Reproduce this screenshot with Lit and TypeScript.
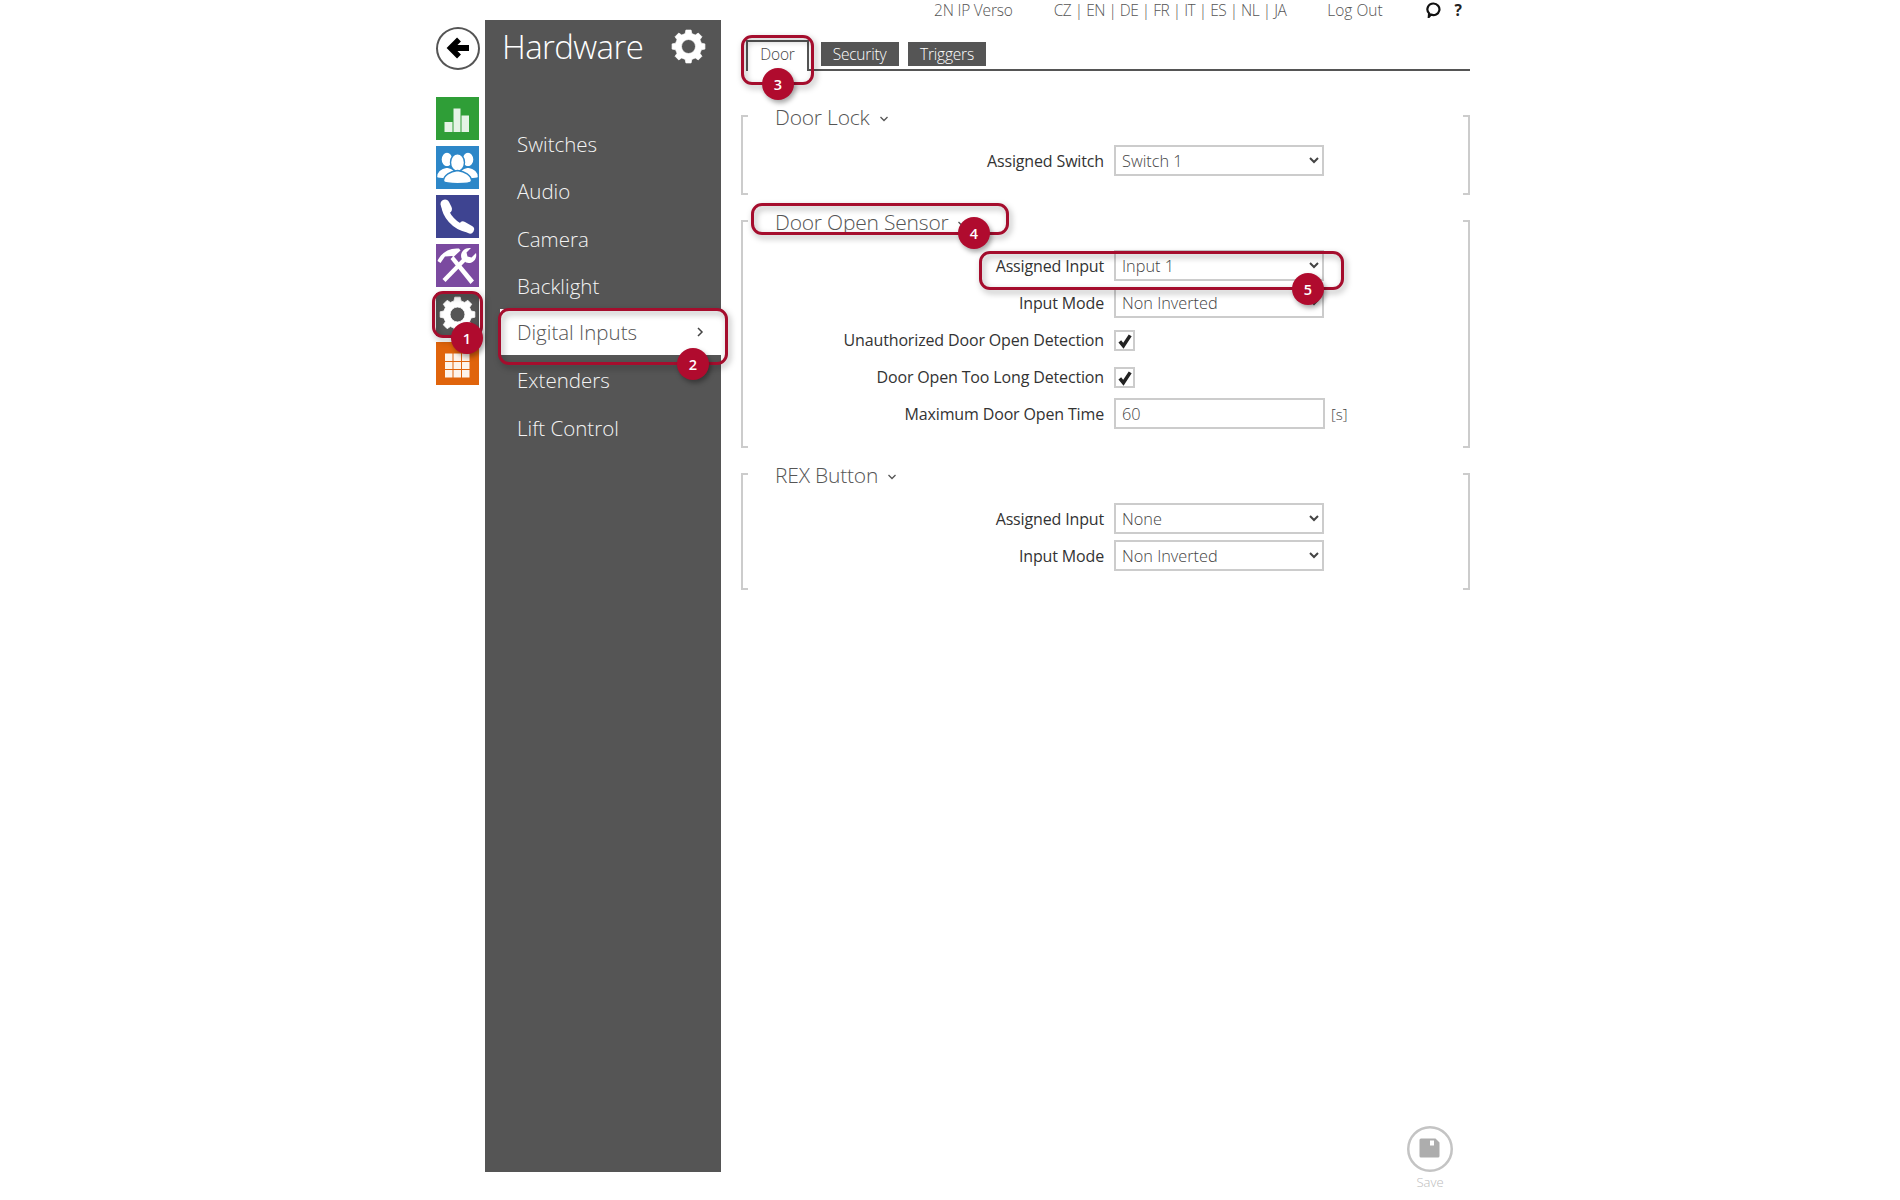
import { LitElement, html, css, svg } from "lit";
import { customElement } from "lit/decorators.js";

function gearPath(cx: number, cy: number, rOut: number, rIn: number, hole: number, teeth = 8) {
  const pts: string[] = [];
  const step = (Math.PI * 2) / teeth;
  for (let i = 0; i < teeth; i++) {
    const a = i * step - Math.PI / 2;
    const seq: [number, number][] = [
      [a - step * 0.32, rIn],
      [a - step * 0.2, rOut],
      [a + step * 0.2, rOut],
      [a + step * 0.32, rIn],
    ];
    for (const [t, r] of seq) pts.push(`${(cx + r * Math.cos(t)).toFixed(2)} ${(cy + r * Math.sin(t)).toFixed(2)}`);
  }
  return `M${pts.join("L")}Z M${cx + hole} ${cy}a${hole} ${hole} 0 1 0 ${-2 * hole} 0a${hole} ${hole} 0 1 0 ${2 * hole} 0Z`;
}

const gear = (cls: string) => html`<svg class=${cls} viewBox="0 0 40 40"><path fill="#fff" fill-rule="evenodd" stroke="#fff" stroke-width=".8" stroke-linejoin="round" d=${gearPath(20, 20, 19, 15.2, 8)}></path></svg>`;

const icons = {
  bars: svg`<path fill="#fff" opacity=".88" d="M8.500 25h8v10h-8zM17.500 11.500h7V35h-7zM25.500 18.500h7.500V35h-7.500z"/>`,
  users: svg`<g fill="#fff" stroke="#2d87c8" stroke-width="1.400">
    <ellipse cx="11" cy="13.500" rx="6" ry="7.500"/><ellipse cx="32" cy="13.500" rx="6" ry="7.500"/>
    <path d="M.5 31c0-6 5-9 10.500-10 5.500 1 10 4 10 10 0 2-20.500 3-20.500 0zM42.500 31c0-6-5-9-10.500-10-5.500 1-10 4-10 10 0 2 20.500 3 20.500 0z"/>
    <ellipse cx="21.500" cy="16.500" rx="7" ry="8.800"/>
    <path d="M7.500 35c0-6 7-9.500 14-10.500 7 1 14 4.500 14 10.500 0 3.500-28 3.500-28 0z"/></g>`,
  phone: svg`<g fill="none" stroke="#fff" stroke-linecap="round">
    <path stroke-width="6.500" d="M8.500 11C9.500 20 18 31.500 31 34"/>
    <path stroke-width="9" d="M9 9l2.500 5"/><path stroke-width="8" d="M27 30.500l7 4"/></g>`,
  tools: svg`<g fill="#fff"><path d="M14.500 15l3-3 20.500 24.500-3.500 3.500z"/>
    <path d="M1.500 17C5 9 13 3.500 23 4.500l1.500 2-7 6.500-1.500-1-7 .5-4.500 6.500z"/>
    <path d="M6.500 35L26.500 14.500l3 3L9.500 38z"/>
    <path d="M25.500 14.500c-2-6 3-11.500 9.500-10.500l-4.500 4.500 1 4 4 1L40 9c1.500 6.500-4 11.500-10 9.500z"/></g>`,
  grid: svg`<path fill="#fff" opacity=".92" d="M9 11.500h7.500v7.500H9zM17.500 11.500H25v7.500h-7.500zM26 11.500h7.500v7.500H26zM9 20h7.500v7H9zM17.500 20H25v7h-7.500zM26 20h7.500v7H26zM9 28h7.500v7.500H9zM17.500 28H25v7.500h-7.500zM26 28h7.500v7.500H26z"/>`,
};

const chev = html`<svg class="chev" viewBox="0 0 10 6"><path d="M1.500 1l3.500 3.500L8.500 1" fill="none" stroke="#555" stroke-width="1.300"/></svg>`;
const check = html`<svg viewBox="0 0 20 20"><path d="M3.500 10.500l4.500 5.500L16.500 3" fill="none" stroke="#222" stroke-width="4.400"/></svg>`;

@customElement("app-root")
export class AppRoot extends LitElement {
  static styles = css`
    :host { display: block; position: relative; width: 1900px; height: 1200px; background: #fff; overflow: hidden;
      font-family: "Open Sans", "Noto Sans", sans-serif; color: #333; }
    .page { display: flex; height: 1200px; padding-left: 436px; box-sizing: border-box; }

    .rail { width: 43px; padding-top: 27px; display: flex; flex-direction: column; gap: 6px; flex: none; }
    .back { width: 44px; height: 43px; box-sizing: border-box; border: 2px solid #555; border-radius: 50%; margin: 0 0 21px 0;
      display: flex; align-items: center; justify-content: center; }
    .back svg { width: 24px; height: 24px; margin-top: -1px; }
    .tile { width: 43px; height: 43px; display: block; }
    .tile.gear { background: #555; display: flex; align-items: center; justify-content: center; }
    .tile-gear { width: 37px; height: 37px; }
    .green { background: #2f9e37; } .blue { background: #2d87c8; } .navy { background: #3e4491; }
    .purple { background: #7b4aa0; } .orange { background: #e0640c; }

    .side { width: 236px; height: 1152px; margin: 20px 0 0 6px; background: #555; color: #fff; flex: none; }
    .side-head { height: 52px; display: flex; align-items: center; justify-content: space-between; padding: 0 15px 0 17px; margin-bottom: 48.300px; }
    .side-head h1 { margin: 1px 0 0; font-size: 33px; font-weight: 300; letter-spacing: -.6px; }
    .head-gear { width: 35px; height: 35px; }
    .menu { margin: 0 0 0 15px; padding: 0; list-style: none; }
    .menu li { height: 47.300px; display: flex; align-items: center; justify-content: space-between; padding: 0 17px 0 17px; font-size: 20.500px; font-weight: 300; color: #f4f4f4; }
    .menu li.on { background: #fff; color: #555; height: 46px; margin-bottom: 1.300px; }
    .menu svg { width: 8px; height: 12px; }

    .main { width: 729px; margin-left: 20px; flex: none; display: flex; flex-direction: column; }
    .top { height: 20px; display: flex; align-items: center; font-size: 15.500px; font-weight: 300; color: #555; margin: 0 0 2px 193px; letter-spacing: -.2px; white-space: nowrap; }
    .top .langs { margin-left: 41px; letter-spacing: -.5px; }
    .top .logout { margin-left: 41px; letter-spacing: 0; }
    .top .bubble { width: 16px; height: 16px; margin: -1px 0 0 42.500px; flex: none; }
    .top .help { margin-left: 13.500px; font-weight: 700; color: #222; font-size: 15.500px; }

    .tabs { display: flex; align-items: flex-end; gap: 9.500px; height: 30px; margin: 17px 0 44px 5px; border-bottom: 2px solid #555; }
    .tab { height: 24px; width: 78px; background: #555; color: #fff; font-size: 15.500px; font-weight: 300; margin-bottom: 3px; display: flex; align-items: center; justify-content: center; letter-spacing: -.2px; }
    .tab.on { width: 63px; height: 31px; box-sizing: border-box; padding-bottom: 5px; background: #fff; color: #444; border: 2px solid #555; border-bottom: 0; margin: 0 2px -2px 0; }

    .group { padding: 0 0 19px 34px; margin-bottom: 25px; background:
      linear-gradient(#ccc,#ccc) left top / 2px 100% no-repeat,
      linear-gradient(#ccc,#ccc) right top / 2px 100% no-repeat,
      linear-gradient(#ccc,#ccc) left top / 7px 2px no-repeat,
      linear-gradient(#ccc,#ccc) left bottom / 7px 2px no-repeat,
      linear-gradient(#ccc,#ccc) right top / 7px 2px no-repeat,
      linear-gradient(#ccc,#ccc) right bottom / 7px 2px no-repeat; }
    .group h2 { margin: -13px 0 13px; height: 30px; display: flex; align-items: center; font-size: 21px; font-weight: 300; color: #555; letter-spacing: -.2px; }
    .chev { width: 10px; height: 6px; margin: 3px 0 0 9px; }
    .rows { display: flex; flex-direction: column; gap: 6px; }
    .row { display: flex; align-items: center; height: 31px; }
    .row label { width: 329px; margin-right: 10px; flex: none; text-align: right; font-size: 16px; color: #333; white-space: nowrap; letter-spacing: -.15px; }
    select, input.text { width: 210px; height: 31px; box-sizing: border-box; border: 2px solid #ccc; background: #fff; font: 300 16.300px "Open Sans", sans-serif; color: #444; padding: 0 0 0 2px; margin: 0; border-radius: 0; outline: none; }
    input.text { padding-left: 6px; width: 211px; }
    .box { width: 21px; height: 21px; box-sizing: border-box; border: 2px solid #ccc; margin-top: 2px; display: flex; align-items: center; justify-content: center; }
    .box svg { width: 16px; height: 16px; }
    .unit { margin-left: 6px; font-size: 15px; font-weight: 300; color: #444; }

    .save { margin-top: auto; align-self: flex-end; width: 60px; margin-right: 10px; padding-bottom: 9px; display: flex; flex-direction: column; align-items: center; color: #bbb; font-size: 13px; font-weight: 300; }
    .save svg { width: 46px; height: 46px; margin-bottom: 1px; }

    .mark { position: absolute; box-sizing: border-box; border: 3px solid #a50d2d; border-radius: 11px; filter: drop-shadow(2px 3px 3px rgba(0,0,0,.35)); }
    .m1 { left: 432px; top: 291px; width: 51px; height: 47px; }
    .m2 { left: 498px; top: 308px; width: 230px; height: 57px; }
    .m3 { left: 741px; top: 35px; width: 73px; height: 50px; }
    .m4 { left: 751px; top: 203px; width: 258px; height: 32px; }
    .m5 { left: 979px; top: 251px; width: 365px; height: 39px; }
    .dot { position: absolute; width: 32px; height: 32px; border-radius: 50%; background: #b00b2e; color: #fff; font-size: 14.500px; font-weight: 600; display: flex; align-items: center; justify-content: center; box-shadow: 2px 3px 5px rgba(0,0,0,.35); font-family: "Open Sans", sans-serif; }
    .d1 { left: 451px; top: 322px; }
    .d2 { left: 677px; top: 348px; }
    .d3 { left: 762px; top: 68px; }
    .d4 { left: 958px; top: 217px; }
    .d5 { left: 1292px; top: 273px; }
  `;

  private field(label: string, value: string) {
    return html`<div class="row"><label>${label}</label><select><option>${value}</option></select></div>`;
  }

  render() {
    const menu = ["Switches", "Audio", "Camera", "Backlight", "Digital Inputs", "Extenders", "Lift Control"];
    return html`
      <div class="page">
        <nav class="rail">
          <div class="back"><svg viewBox="0 0 24 24"><path d="M23 12H8" fill="none" stroke="#000" stroke-width="6"/><path d="M13 3.500L4.500 12l8.500 8.500" fill="none" stroke="#000" stroke-width="5.500"/></svg></div>
          <svg class="tile green" viewBox="0 0 43 43">${icons.bars}</svg>
          <svg class="tile blue" viewBox="0 0 43 43">${icons.users}</svg>
          <svg class="tile navy" viewBox="0 0 43 43">${icons.phone}</svg>
          <svg class="tile purple" viewBox="0 0 43 43">${icons.tools}</svg>
          <div class="tile gear">${gear("tile-gear")}</div>
          <svg class="tile orange" viewBox="0 0 43 43">${icons.grid}</svg>
        </nav>
        <aside class="side">
          <div class="side-head"><h1>Hardware</h1>${gear("head-gear")}</div>
          <ul class="menu">
            ${menu.map((m) => html`<li class=${m === "Digital Inputs" ? "on" : ""}>${m}${m === "Digital Inputs" ? html`<svg viewBox="0 0 8 12"><path d="M2 2l4 4-4 4" fill="none" stroke="#444" stroke-width="1.500"/></svg>` : ""}</li>`)}
          </ul>
        </aside>
        <main class="main">
          <div class="top">
            <span>2N IP Verso</span>
            <span class="langs">CZ | EN | DE | FR | IT | ES | NL | JA</span>
            <span class="logout">Log Out</span>
            <svg class="bubble" viewBox="0 0 16 16"><path d="M8.500 1.500a6 5.800 0 1 1-2.500 11.100L3.800 15l.3-3.700A6 5.800 0 0 1 8.500 1.500z" fill="none" stroke="#111" stroke-width="2.200"/></svg>
            <span class="help">?</span>
          </div>
          <div class="tabs"><div class="tab on">Door</div><div class="tab">Security</div><div class="tab">Triggers</div></div>
          <section class="group">
            <h2>Door Lock${chev}</h2>
            <div class="rows">${this.field("Assigned Switch", "Switch 1")}</div>
          </section>
          <section class="group">
            <h2>Door Open Sensor${chev}</h2>
            <div class="rows">
              ${this.field("Assigned Input", "Input 1")}
              ${this.field("Input Mode", "Non Inverted")}
              <div class="row"><label>Unauthorized Door Open Detection</label><div class="box">${check}</div></div>
              <div class="row"><label>Door Open Too Long Detection</label><div class="box">${check}</div></div>
              <div class="row"><label>Maximum Door Open Time</label><input class="text" value="60" /><span class="unit">[s]</span></div>
            </div>
          </section>
          <section class="group">
            <h2>REX Button${chev}</h2>
            <div class="rows">
              ${this.field("Assigned Input", "None")}
              ${this.field("Input Mode", "Non Inverted")}
            </div>
          </section>
          <div class="save">
            <svg viewBox="0 0 46 46"><circle cx="23" cy="23" r="21.750" fill="#fff" stroke="#c4c4c4" stroke-width="2.500"/><path fill="#adadad" fill-rule="evenodd" d="M14 12.500h14.500l4 4V30a1.500 1.500 0 0 1-1.500 1.500H14a1.500 1.500 0 0 1-1.500-1.500V14a1.500 1.500 0 0 1 1.500-1.500zM23 14.500v5h4v-5z"/></svg>
            <span>Save</span>
          </div>
        </main>
      </div>
      <div class="mark m1"></div><div class="mark m2"></div><div class="mark m3"></div><div class="mark m4"></div><div class="mark m5"></div>
      <div class="dot d1">1</div><div class="dot d2">2</div><div class="dot d3">3</div><div class="dot d4">4</div><div class="dot d5">5</div>
    `;
  }
}
